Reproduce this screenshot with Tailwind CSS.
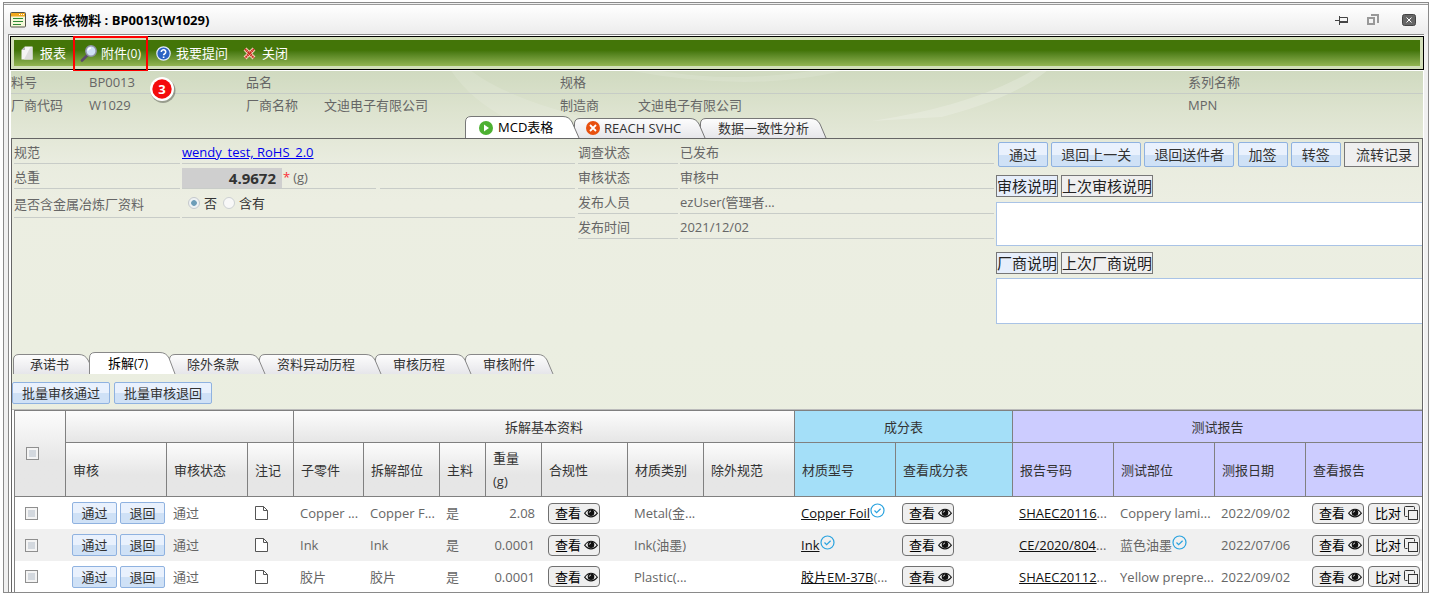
<!DOCTYPE html>
<html lang="zh-CN">
<head>
<meta charset="utf-8">
<title>审核-依物料 : BP0013(W1029)</title>
<script src="https://cdn.jsdelivr.net/npm/@tailwindcss/browser@4"></script>
</head>
<body class="bg-white font-['Open_Sans','Noto_Sans_CJK_SC',sans-serif] text-[13px] leading-5 text-[#666]">
<svg width="0" height="0" class="absolute" aria-hidden="true">
  <defs>
    <linearGradient id="tabfill" x1="0" y1="0" x2="0" y2="1"><stop offset="0" stop-color="#fdfdfd"/><stop offset="1" stop-color="#e6e6ea"/></linearGradient>
    <symbol id="eye" viewBox="0 0 14 10"><path d="M.6 5.2Q3.400 1.200 7 1.200t6.400 4Q10.600 8.900 7 8.900T.6 5.200Z" fill="#eee" stroke="#111" stroke-width="1.100"/><circle cx="7" cy="4.800" r="3.300" fill="#111"/><path d="M5.300 4.600A1.800 1.800 0 0 1 7 3" fill="none" stroke="#fff" stroke-width=".8"/></symbol>
    <symbol id="copy" viewBox="0 0 14 14"><g fill="none" stroke="#333"><path d="M3.500 10.500H1.500a1 1 0 0 1-1-1v-8a1 1 0 0 1 1-1h8a1 1 0 0 1 1 1V3.500"/><rect x="4.500" y="4.500" width="9" height="9"/></g></symbol>
    <symbol id="file" viewBox="0 0 14 16"><path d="M1.500 1.500H9.500L13.500 5.500V14.500H1.500Z" fill="#fff" stroke="#555"/><path d="M9.500 1.500V5.500H13.500" fill="none" stroke="#555"/></symbol>
    <symbol id="ok" viewBox="0 0 15 15"><circle cx="7.500" cy="7.500" r="6.500" fill="none" stroke="#2aa3df" stroke-width="1.200"/><path d="M4.500 7.500l2.100 2.100 4-3.900" fill="none" stroke="#2aa3df" stroke-width="1.200"/></symbol>
  </defs>
</svg>

<div class="ml-[3px] mt-[2px] border border-[#8a8a8a] bg-[#f0f0f0]">
  <header class="mt-px flex h-[30px] items-center border-t border-[#9a9a9a] bg-linear-to-b from-white to-[#ececec] pl-[6px] pr-3">
    <svg width="16" height="16" viewBox="0 0 16 16"><rect x=".5" y=".5" width="15" height="14.500" rx="1" fill="#f4f8d8" stroke="#55554a"/><path d="M1 1h14v3.500H1z" fill="#f2a81e"/><path d="M9 2.500h1M11 2.500h1M13 2.500h1" stroke="#fff"/><path d="M3 6.500h10M3 9.500h10M3 12.500h8" stroke="#2f8a36"/></svg>
    <h1 class="ml-[6px] flex-1 text-[13px] font-bold text-black">审核-依物料 : BP0013(W1029)</h1>
    <div class="flex items-center">
      <button type="button" aria-label="固定" class="mr-[18px]"><svg width="14" height="10" viewBox="0 0 14 10"><path d="M0 5.500h4M4.500 1v9M5 2.500h7.500v5H5" fill="none" stroke="#444"/><path d="M5 7h8" stroke="#444" stroke-width="2"/></svg></button>
      <button type="button" aria-label="还原" class="mr-[23px]"><svg width="12" height="12" viewBox="0 0 12 12"><path d="M1 4h6v6H1z" fill="none" stroke="#999" stroke-width="2"/><path d="M4 1h7v8" fill="none" stroke="#999" stroke-width="2"/></svg></button>
      <button type="button" aria-label="关闭窗口"><svg width="14" height="12" viewBox="0 0 14 12"><rect x=".5" y=".5" width="13" height="11" rx="2" fill="#666" stroke="#444"/><path d="M4.500 3.500l5 5M9.500 3.500l-5 5" stroke="#fff"/></svg></button>
    </div>
  </header>

  <div class="ml-1 mr-1 border-l border-t border-[#8a8a8a] bg-white pl-px">
    <nav class="mt-px border border-black bg-[#d3dfb9] p-[3px]">
      <div class="relative flex h-[26px] items-center bg-linear-to-b from-[#437508] from-40% to-[#93b552] pl-[7px] text-white">
        <button type="button" class="flex items-center gap-[7px]"><svg width="12" height="14" viewBox="0 0 12 14"><path d="M4 .5h7.500v13H.5V4Z" fill="#f4f4f4"/><path d="M4 .5V4H.5Z" fill="#b5b5b5"/><path d="M9 2l2.500-1v12.500H3Z" fill="#ddd"/></svg>报表</button>
        <button type="button" class="ml-[14px] flex items-center gap-[3px]"><svg width="18" height="17" viewBox="0 0 18 17"><path d="M7 10.500L2 15.500" stroke="#5b4a6a" stroke-width="2.600" stroke-linecap="round"/><circle cx="11" cy="6" r="5.200" fill="#cfe0f7" stroke="#8f93a6" stroke-width="1.500"/><path d="M8 5.500a3 3 0 0 1 3-2.600" stroke="#fff" stroke-width="1.500" fill="none"/></svg><span>附件<span class="text-[12px]">(0)</span></span></button>
        <button type="button" class="ml-[15px] flex items-center gap-[5px]"><svg width="15" height="15" viewBox="0 0 15 15"><circle cx="7.500" cy="7.500" r="6.700" fill="#2b63c4" stroke="#e4ecfa" stroke-width="1.200"/><path d="M5.300 6a2.200 2.200 0 1 1 3.400 1.800Q7.600 8.400 7.600 9.300M7.600 10.500V12" fill="none" stroke="#fff" stroke-width="1.600"/></svg>我要提问</button>
        <button type="button" class="ml-[15px] flex items-center gap-[6px]"><svg width="13" height="13" viewBox="0 0 13 13"><path d="M2 2l9 9M11 2l-9 9" stroke="#f3e3c8" stroke-width="4"/><path d="M2 2l9 9M11 2l-9 9" stroke="#c8281c" stroke-width="2.400" stroke-dasharray="1.500 .5"/></svg>关闭</button>
        <div class="absolute -top-[4px] left-[59px] h-[36px] w-[75px] border-2 border-[#f00]"></div>
        <svg class="absolute left-[133px] top-[34px] z-10" width="30" height="30" viewBox="0 0 30 30"><circle cx="16" cy="16.500" r="12.500" fill="#000" opacity=".3"/><circle cx="15" cy="15" r="12" fill="#fff"/><circle cx="15" cy="15" r="9.700" fill="#f40b0b"/><text x="15" y="20" font-size="13" font-weight="bold" fill="#fff" text-anchor="middle">3</text></svg>
      </div>
    </nav>

    <main class="relative ml-px mr-px mt-px bg-[linear-gradient(#d0dac0,#dde3cf_40px,#e9ecdf_90px,#eceee2_130px,#eaeee0_400px)]">
      <svg class="pointer-events-none absolute inset-x-0 top-0 h-[50px] w-full" viewBox="0 0 1411 50" preserveAspectRatio="none" aria-hidden="true"><path d="M1035 0Q1000 28 930 46L860 50Q960 35 1020 0Z" fill="#fff" opacity=".2"/><path d="M460 0Q500 30 590 50H500Q460 30 440 0ZM650 0Q720 12 800 0L830 0Q740 22 620 0Z" fill="#fff" opacity=".12"/></svg>
      <dl class="relative grid grid-cols-[78px_157px_78px_236px_78px_550px_1fr] leading-[22px]">
        <dt class="border-b border-[#c6ccc6]">料号</dt><dd class="border-b border-[#c6ccc6]">BP0013</dd>
        <dt class="border-b border-[#c6ccc6]">品名</dt><dd class="border-b border-[#c6ccc6]"></dd>
        <dt class="border-b border-[#c6ccc6]">规格</dt><dd class="border-b border-[#c6ccc6]"></dd>
        <dt class="border-b border-[#c6ccc6]">系列名称</dt>
        <dt>厂商代码</dt><dd>W1029</dd><dt>厂商名称</dt><dd>文迪电子有限公司</dd><dt>制造商</dt><dd>文迪电子有限公司</dd><dt>MPN</dt>
      </dl>

      <div class="relative flex items-end pl-[454px] text-[13px] leading-5" role="tablist">
        <button type="button" role="tab" aria-selected="true" class="relative z-30 h-[22px] w-[115px] pl-[33px] text-left text-black">
          <svg class="absolute inset-0 -z-10" width="115" height="22"><path d="M.5 22V6Q.5 .5 6 .5H98Q104 .5 107 6L114 22" fill="#fff" stroke="#777"/></svg>
          <svg class="absolute left-[14px] top-[5px]" width="14" height="14" viewBox="0 0 14 14"><circle cx="7" cy="7" r="7" fill="#4cb031"/><path d="M5 3.500l5 3.500-5 3.500Z" fill="#fff"/></svg>MCD表格</button>
        <button type="button" role="tab" class="relative z-20 -ml-[6px] h-[20px] w-[132px] pl-[30px] text-left text-[#333]">
          <svg class="absolute inset-0 -z-10" width="132" height="20"><path d="M.5 20V5Q1 .5 6 .5H116Q122 .5 125 6L131 20" fill="url(#tabfill)" stroke="#777"/></svg>
          <svg class="absolute left-[12px] top-[3px]" width="14" height="14" viewBox="0 0 14 14"><circle cx="7" cy="7" r="7" fill="#e8500f"/><path d="M4 4l6 6M10 4l-6 6" stroke="#fff" stroke-width="1.800"/></svg>REACH SVHC</button>
        <button type="button" role="tab" class="relative z-10 -ml-[6px] h-[20px] w-[127px] pl-[18px] text-left text-[#333]">
          <svg class="absolute inset-0 -z-10" width="127" height="20"><path d="M.5 20V5Q1 .5 6 .5H111Q117 .5 120 6L126 20" fill="url(#tabfill)" stroke="#777"/></svg>数据一致性分析</button>
      </div>

      <section class="relative border border-b-0 border-[#666]">
        <div class="flex h-[213px]">
          <div class="mr-[3px] w-[563px] shrink-0 pl-[2px]">
            <div class="flex h-[25px] gap-[2px]"><div class="w-[166px] border-b border-[#c8ccc8] leading-[26px]">规范</div><div class="flex-1 border-b border-[#c8ccc8] leading-[26px]"><a href="#" class="text-[#0000ee] underline">wendy_test, RoHS_2.0</a></div></div>
            <div class="flex h-[25px] gap-[2px]"><label for="weight" class="w-[166px] border-b border-[#c8ccc8] leading-[26px]">总重</label><div class="flex w-[194px] border-b border-[#c8ccc8] leading-[26px]"><input id="weight" value="4.9672" readonly class="mt-[4px] h-[20px] w-[100px] bg-[#cfcfcf] pr-[6px] text-right text-[15px] font-bold text-[#333]"><span class="mr-[3px] pl-px text-red-500">*</span>(g)</div><div class="ml-[2px] flex-1 border-b border-[#c8ccc8]"></div></div>
            <div class="flex h-[29px] gap-[2px]"><div class="w-[166px] border-b border-[#c8ccc8] leading-[30px]">是否含金属冶炼厂资料</div><div class="flex flex-1 items-center border-b border-[#c8ccc8] pl-[6px] text-[#333]"><input id="no" type="radio" name="metal" checked class="size-[12px] appearance-none rounded-full border border-[#c4c8cc] bg-[#f8f8f8] checked:bg-[radial-gradient(circle,#6d9db8_35%,#eef2f4_45%)]"><label for="no" class="ml-[4px]">否</label><input id="yes" type="radio" name="metal" class="ml-[6px] size-[12px] appearance-none rounded-full border border-[#ccd0d2] bg-[#f8f8f8]"><label for="yes" class="ml-[4px]">含有</label></div></div>
          </div>
          <dl class="mr-[2px] grid h-[100px] min-w-0 flex-1 grid-cols-[100px_1fr] grid-rows-4 gap-x-[2px] leading-[26px]">
            <dt class="border-b border-[#c8ccc8]">调查状态</dt><dd class="border-b border-[#c8ccc8]">已发布</dd>
            <dt class="border-b border-[#c8ccc8]">审核状态</dt><dd class="border-b border-[#c8ccc8]">审核中</dd>
            <dt class="border-b border-[#c8ccc8]">发布人员</dt><dd class="border-b border-[#c8ccc8]">ezUser(管理者...</dd>
            <dt class="border-b border-[#c8ccc8]">发布时间</dt><dd class="border-b border-[#c8ccc8]">2021/12/02</dd>
          </dl>
          <div class="w-[426px] shrink-0 pt-[3px] text-[#333]">
            <div class="flex justify-between pl-[2px] pr-[3px] text-[14px] leading-[22px]">
              <button type="button" class="h-[25px] rounded-xs border border-[#8fb2e0] bg-linear-to-b from-[#e9f1fd] from-50% to-[#cfe1f6] to-50% px-[10px]">通过</button>
              <button type="button" class="h-[25px] rounded-xs border border-[#8fb2e0] bg-linear-to-b from-[#e9f1fd] from-50% to-[#cfe1f6] to-50% px-[9px]">退回上一关</button>
              <button type="button" class="h-[25px] rounded-xs border border-[#8fb2e0] bg-linear-to-b from-[#e9f1fd] from-50% to-[#cfe1f6] to-50% px-[9px]">退回送件者</button>
              <button type="button" class="h-[25px] rounded-xs border border-[#8fb2e0] bg-linear-to-b from-[#e9f1fd] from-50% to-[#cfe1f6] to-50% px-[10px]">加签</button>
              <button type="button" class="h-[25px] rounded-xs border border-[#8fb2e0] bg-linear-to-b from-[#e9f1fd] from-50% to-[#cfe1f6] to-50% px-[10px]">转签</button>
              <button type="button" class="h-[25px] border border-[#777] bg-[#efefef] pl-[11px] pr-[6px]">流转记录</button>
            </div>
            <div class="mt-[8px] flex gap-[3px] text-[15px] leading-5 text-[#222]"><button type="button" class="h-[22px] border border-[#777] bg-[#e6eefb]">审核说明</button><button type="button" class="h-[22px] border border-[#777] bg-[#efefef]">上次审核说明</button></div>
            <textarea aria-label="审核说明" class="mt-[5px] block h-[44px] w-full resize-none border border-r-0 border-[#a9c3e6] bg-white"></textarea>
            <div class="mt-[6px] flex gap-[3px] text-[15px] leading-5 text-[#222]"><button type="button" class="h-[22px] border border-[#777] bg-[#e6eefb]">厂商说明</button><button type="button" class="h-[22px] border border-[#777] bg-[#efefef]">上次厂商说明</button></div>
            <textarea aria-label="厂商说明" class="mt-[4px] block h-[46px] w-full resize-none border border-r-0 border-[#a9c3e6] bg-white"></textarea>
          </div>
        </div>

        <div class="relative flex items-end pl-px leading-5 text-[#333]" role="tablist">
          <button type="button" role="tab" class="relative z-10 h-[20px] w-[83px] pl-[17px] text-left"><svg class="absolute inset-0 -z-10" width="83" height="20"><path d="M.5 20V5Q1 .5 6 .5H66Q72 .5 75 6L82 20" fill="url(#tabfill)" stroke="#888"/></svg>承诺书</button>
          <button type="button" role="tab" aria-selected="true" class="relative z-50 -ml-[7px] h-[22px] w-[87px] pl-[19px] text-left text-black"><svg class="absolute inset-0 -z-10" width="87" height="22"><path d="M.5 22V6Q.5 .5 6 .5H71Q77 .5 80 6L86 22" fill="#fff" stroke="#888"/></svg>拆解<span class="text-[12px]">(7)</span></button>
          <button type="button" role="tab" class="relative z-40 -ml-[7px] h-[20px] w-[97px] pl-[18px] text-left"><svg class="absolute inset-0 -z-10" width="97" height="20"><path d="M.5 20V5Q1 .5 6 .5H81Q87 .5 90 6L96 20" fill="url(#tabfill)" stroke="#888"/></svg>除外条款</button>
          <button type="button" role="tab" class="relative z-30 -ml-[7px] h-[20px] w-[123px] pl-[18px] text-left"><svg class="absolute inset-0 -z-10" width="123" height="20"><path d="M.5 20V5Q1 .5 6 .5H107Q113 .5 116 6L122 20" fill="url(#tabfill)" stroke="#888"/></svg>资料异动历程</button>
          <button type="button" role="tab" class="relative z-20 -ml-[7px] h-[20px] w-[97px] pl-[18px] text-left"><svg class="absolute inset-0 -z-10" width="97" height="20"><path d="M.5 20V5Q1 .5 6 .5H81Q87 .5 90 6L96 20" fill="url(#tabfill)" stroke="#888"/></svg>审核历程</button>
          <button type="button" role="tab" class="relative z-10 -ml-[7px] h-[20px] w-[89px] pl-[18px] text-left"><svg class="absolute inset-0 -z-10" width="89" height="20"><path d="M.5 20V5Q1 .5 6 .5H73Q79 .5 82 6L88 20" fill="url(#tabfill)" stroke="#888"/></svg>审核附件</button>
        </div>
        <div class="mt-[8px] flex gap-[4px] leading-5 text-[#333]">
          <button type="button" class="h-[22px] rounded-xs border border-[#8fb2e0] bg-linear-to-b from-[#e9f1fd] from-50% to-[#cfe1f6] to-50% px-[9px]">批量审核通过</button>
          <button type="button" class="h-[22px] rounded-xs border border-[#8fb2e0] bg-linear-to-b from-[#e9f1fd] from-50% to-[#cfe1f6] to-50% px-[9px]">批量审核退回</button>
        </div>

        <div class="mt-[5px] border-t border-[#bbb] bg-white pl-[2px]">
          <table class="w-full table-fixed border-separate border-spacing-0 border-l border-t border-[#808080] text-left">
            <colgroup><col class="w-[51px]"><col class="w-[101px]"><col class="w-[81px]"><col class="w-[46px]"><col class="w-[70px]"><col class="w-[76px]"><col class="w-[46px]"><col class="w-[56px]"><col class="w-[86px]"><col class="w-[76px]"><col class="w-[91px]"><col class="w-[101px]"><col class="w-[117px]"><col class="w-[101px]"><col class="w-[101px]"><col class="w-[91px]"><col></colgroup>
            <thead class="text-[#333] [&_th]:border-b [&_th]:border-r [&_th]:border-[#808080] [&_th]:font-normal [&_th:last-child]:border-r-0">
              <tr class="h-[32px]">
                <th rowspan="2" class="bg-linear-to-b from-[#fcfcfc] to-[#e6e6e6] to-60% pl-[11px]"><input type="checkbox" aria-label="全选" class="block size-[13px] appearance-none border border-[#8f8f8f] bg-[#d3d8de] shadow-[inset_0_0_0_2px_#f4f4f4]"></th>
                <th colspan="3" class="bg-linear-to-b from-[#fcfcfc] to-[#e6e6e6]"></th>
                <th colspan="7" class="bg-linear-to-b from-[#fcfcfc] to-[#e6e6e6] text-center">拆解基本资料</th>
                <th colspan="2" class="bg-[#a4dff8] text-center">成分表</th>
                <th colspan="4" class="bg-[#ccccff] text-center">测试报告</th>
              </tr>
              <tr class="h-[54px] [&_th]:bg-linear-to-b [&_th]:from-[#fcfcfc] [&_th]:to-[#e6e6e6] [&_th]:to-60% [&_th]:pl-[7px]">
                <th>审核</th><th>审核状态</th><th>注记</th><th>子零件</th><th>拆解部位</th><th>主料</th><th class="leading-[23px]">重量<br>(g)</th><th>合规性</th><th>材质类别</th><th>除外规范</th>
                <th class="bg-none! bg-[#a4dff8]">材质型号</th><th class="bg-none! bg-[#a4dff8]">查看成分表</th>
                <th class="bg-none! bg-[#ccccff]">报告号码</th><th class="bg-none! bg-[#ccccff]">测试部位</th><th class="bg-none! bg-[#ccccff]">测报日期</th><th class="bg-none! bg-[#ccccff]">查看报告</th>
              </tr>
            </thead>
            <tbody class="[&_tr]:h-[32px] [&_tr:nth-child(even)]:bg-[#f0f0f0] [&_td]:whitespace-nowrap [&_td]:pl-[6px] [&_td:first-child]:pl-[10px] [&_a]:text-[#111] [&_a]:underline [&_input]:block [&_input]:size-[13px] [&_input]:appearance-none [&_input]:border [&_input]:border-[#8f8f8f] [&_input]:bg-[#d3d8de] [&_input]:shadow-[inset_0_0_0_2px_#f4f4f4]">
              <tr>
                <td><input type="checkbox" aria-label="选择 Copper"></td>
                <td><div class="flex gap-[3px] text-[#333]"><button type="button" class="h-[22px] w-[45px] rounded-xs border border-[#8fb2e0] bg-linear-to-b from-[#e9f1fd] from-50% to-[#cfe1f6] to-50%">通过</button><button type="button" class="h-[22px] w-[45px] rounded-xs border border-[#8fb2e0] bg-linear-to-b from-[#e9f1fd] from-50% to-[#cfe1f6] to-50%">退回</button></div></td>
                <td>通过</td><td><svg width="14" height="16" role="img" aria-label="注记"><use href="#file"/></svg></td>
                <td>Copper ...</td><td>Copper F...</td><td>是</td><td class="pr-[7px] text-right">2.08</td>
                <td><button type="button" class="flex h-[21px] w-[52px] items-center justify-between rounded-sm border border-[#707070] bg-[#efefef] pl-[6px] pr-px text-black">查看<svg width="14" height="10"><use href="#eye"/></svg></button></td>
                <td>Metal(金...</td><td></td>
                <td><div class="flex"><a href="#">Copper Foil</a><svg width="15" height="15"><use href="#ok"/></svg></div></td>
                <td><button type="button" class="flex h-[21px] w-[52px] items-center justify-between rounded-sm border border-[#707070] bg-[#efefef] pl-[6px] pr-px text-black">查看<svg width="14" height="10"><use href="#eye"/></svg></button></td>
                <td><a href="#">SHAEC20116</a>...</td><td>Coppery lami...</td><td>2022/09/02</td>
                <td><div class="flex gap-[4px]"><button type="button" class="flex h-[21px] w-[52px] items-center justify-between rounded-sm border border-[#707070] bg-[#efefef] pl-[6px] pr-px text-black">查看<svg width="14" height="10"><use href="#eye"/></svg></button><button type="button" class="flex h-[21px] w-[52px] items-center justify-between rounded-sm border border-[#707070] bg-[#efefef] pl-[6px] pr-px text-black">比对<svg width="14" height="14"><use href="#copy"/></svg></button></div></td>
              </tr>
              <tr>
                <td><input type="checkbox" aria-label="选择 Ink"></td>
                <td><div class="flex gap-[3px] text-[#333]"><button type="button" class="h-[22px] w-[45px] rounded-xs border border-[#8fb2e0] bg-linear-to-b from-[#e9f1fd] from-50% to-[#cfe1f6] to-50%">通过</button><button type="button" class="h-[22px] w-[45px] rounded-xs border border-[#8fb2e0] bg-linear-to-b from-[#e9f1fd] from-50% to-[#cfe1f6] to-50%">退回</button></div></td>
                <td>通过</td><td><svg width="14" height="16" role="img" aria-label="注记"><use href="#file"/></svg></td>
                <td>Ink</td><td>Ink</td><td>是</td><td class="pr-[7px] text-right">0.0001</td>
                <td><button type="button" class="flex h-[21px] w-[52px] items-center justify-between rounded-sm border border-[#707070] bg-[#efefef] pl-[6px] pr-px text-black">查看<svg width="14" height="10"><use href="#eye"/></svg></button></td>
                <td>Ink(油墨)</td><td></td>
                <td><div class="flex"><a href="#">Ink</a><svg width="15" height="15"><use href="#ok"/></svg></div></td>
                <td><button type="button" class="flex h-[21px] w-[52px] items-center justify-between rounded-sm border border-[#707070] bg-[#efefef] pl-[6px] pr-px text-black">查看<svg width="14" height="10"><use href="#eye"/></svg></button></td>
                <td><a href="#">CE/2020/804</a>...</td><td><div class="flex">蓝色油墨<svg width="15" height="15"><use href="#ok"/></svg></div></td><td>2022/07/06</td>
                <td><div class="flex gap-[4px]"><button type="button" class="flex h-[21px] w-[52px] items-center justify-between rounded-sm border border-[#707070] bg-[#efefef] pl-[6px] pr-px text-black">查看<svg width="14" height="10"><use href="#eye"/></svg></button><button type="button" class="flex h-[21px] w-[52px] items-center justify-between rounded-sm border border-[#707070] bg-[#efefef] pl-[6px] pr-px text-black">比对<svg width="14" height="14"><use href="#copy"/></svg></button></div></td>
              </tr>
              <tr class="h-[31px]!">
                <td><input type="checkbox" aria-label="选择 胶片"></td>
                <td><div class="flex gap-[3px] text-[#333]"><button type="button" class="h-[22px] w-[45px] rounded-xs border border-[#8fb2e0] bg-linear-to-b from-[#e9f1fd] from-50% to-[#cfe1f6] to-50%">通过</button><button type="button" class="h-[22px] w-[45px] rounded-xs border border-[#8fb2e0] bg-linear-to-b from-[#e9f1fd] from-50% to-[#cfe1f6] to-50%">退回</button></div></td>
                <td>通过</td><td><svg width="14" height="16" role="img" aria-label="注记"><use href="#file"/></svg></td>
                <td>胶片</td><td>胶片</td><td>是</td><td class="pr-[7px] text-right">0.0001</td>
                <td><button type="button" class="flex h-[21px] w-[52px] items-center justify-between rounded-sm border border-[#707070] bg-[#efefef] pl-[6px] pr-px text-black">查看<svg width="14" height="10"><use href="#eye"/></svg></button></td>
                <td>Plastic(...</td><td></td>
                <td><a href="#">胶片EM-37B</a>(...</td>
                <td><button type="button" class="flex h-[21px] w-[52px] items-center justify-between rounded-sm border border-[#707070] bg-[#efefef] pl-[6px] pr-px text-black">查看<svg width="14" height="10"><use href="#eye"/></svg></button></td>
                <td><a href="#">SHAEC20112</a>...</td><td>Yellow prepre...</td><td>2022/09/02</td>
                <td><div class="flex gap-[4px]"><button type="button" class="flex h-[21px] w-[52px] items-center justify-between rounded-sm border border-[#707070] bg-[#efefef] pl-[6px] pr-px text-black">查看<svg width="14" height="10"><use href="#eye"/></svg></button><button type="button" class="flex h-[21px] w-[52px] items-center justify-between rounded-sm border border-[#707070] bg-[#efefef] pl-[6px] pr-px text-black">比对<svg width="14" height="14"><use href="#copy"/></svg></button></div></td>
              </tr>
            </tbody>
          </table>
        </div>
      </section>
    </main>
  </div>
</div>
</body>
</html>
